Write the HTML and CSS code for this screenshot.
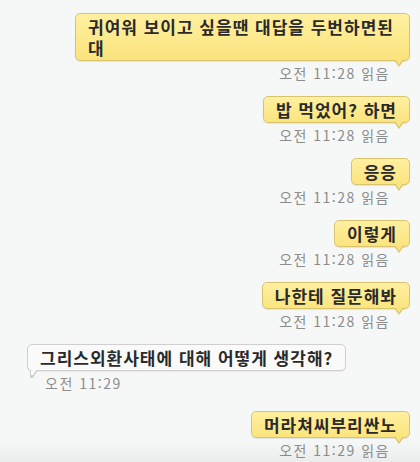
FILE: index.html
```html
<!DOCTYPE html>
<html lang="ko">
  <head>
    <meta charset="UTF-8" />
    <meta name="viewport" content="width=device-width, initial-scale=1" />
    <title>채팅</title>
    <link rel="stylesheet" href="styles.css">
  </head>
  <body>
    <main class="chat">
      <div class="msg sent">
        <div class="bubble">귀여워 보이고 싶을땐 대답을 두번하면된대</div>
        <div class="meta">오전 11:28 읽음</div>
      </div>
      <div class="msg sent">
        <div class="bubble">밥 먹었어? 하면</div>
        <div class="meta">오전 11:28 읽음</div>
      </div>
      <div class="msg sent">
        <div class="bubble">응응</div>
        <div class="meta">오전 11:28 읽음</div>
      </div>
      <div class="msg sent">
        <div class="bubble">이렇게</div>
        <div class="meta">오전 11:28 읽음</div>
      </div>
      <div class="msg sent">
        <div class="bubble">나한테 질문해봐</div>
        <div class="meta">오전 11:28 읽음</div>
      </div>
      <div class="msg received">
        <div class="bubble">그리스외환사태에 대해 어떻게 생각해?</div>
        <div class="meta">오전 11:29</div>
      </div>
      <div class="msg sent">
        <div class="bubble">머라쳐씨부리싼노</div>
        <div class="meta">오전 11:29 읽음</div>
      </div>
    </main>
  </body>
</html>
```

FILE: styles.css
```css
* {
  box-sizing: border-box;
}

html,
body {
  height: 100%;
  margin: 0;
  overflow: hidden;
}

body {
  background: linear-gradient(to bottom, #f6f8f7 0, #f6f8f7 440px, #eaedeb 462px);
  color: #2a2a2a;
  font-family: "Noto Sans CJK KR", "Noto Sans", sans-serif;
}

.chat {
  display: flex;
  flex-direction: column;
  gap: 14px;
  padding: 13px 10px 0 27px;
}

.msg {
  display: flex;
  flex-direction: column;
}

.msg.sent {
  align-items: flex-end;
}

.msg.received {
  align-items: flex-start;
  margin-bottom: 5px;
}

.bubble {
  border-radius: 5px;
  font-size: 17px;
  font-weight: 700;
  letter-spacing: 1px;
  line-height: 21px;
  max-width: 335px;
  padding: 2px 12px;
  position: relative;
}

.sent .bubble {
  background: linear-gradient(to bottom, #fff0a0, #fbe47e);
  border: 1px solid #d9c46e;
  box-shadow: 0 1px 1px rgba(0, 0, 0, 0.08);
}

.received .bubble {
  background: #fafafa;
  border: 1px solid #cfcfcf;
  box-shadow: 0 1px 1px rgba(0, 0, 0, 0.06);
}

/* bubble tails */
.bubble::before,
.bubble::after {
  content: "";
  height: 0;
  position: absolute;
  width: 0;
}

.sent .bubble::before {
  border-left: 5px solid transparent;
  border-right: 5px solid transparent;
  border-top: 7px solid #d9c46e;
  bottom: -7px;
  right: 5px;
}

.sent .bubble::after {
  border-left: 4px solid transparent;
  border-right: 4px solid transparent;
  border-top: 6px solid #fbe47e;
  bottom: -5px;
  right: 6px;
}

.received .bubble::before {
  border-left: 3px solid #cfcfcf;
  border-right: 5px solid transparent;
  border-top: 8px solid #cfcfcf;
  bottom: -8px;
  left: 2px;
}

.received .bubble::after {
  border-left: 2px solid #fafafa;
  border-right: 4px solid transparent;
  border-top: 6px solid #fafafa;
  bottom: -5px;
  left: 3px;
}

.meta {
  color: #8c8c8c;
  font-size: 14px;
  letter-spacing: 1.5px;
  line-height: 18px;
  margin-top: 3px;
}

.sent .meta {
  padding-right: 20px;
}

.received .meta {
  padding-left: 18px;
}
```
